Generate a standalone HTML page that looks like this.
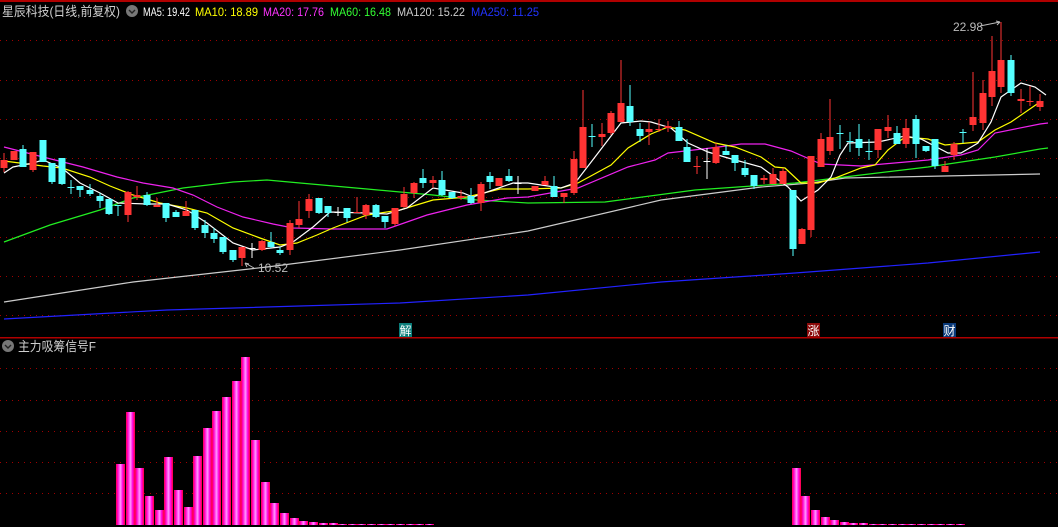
<!DOCTYPE html>
<html><head><meta charset="utf-8"><style>
html,body{margin:0;padding:0;background:#000;width:1058px;height:527px;overflow:hidden}
svg{display:block}
text{font-family:"Liberation Sans","Noto Sans CJK SC",sans-serif}
</style></head><body>
<svg id="s" width="1058" height="527" xmlns="http://www.w3.org/2000/svg">
<defs>
<linearGradient id="bg" x1="0" x2="1" y1="0" y2="0">
<stop offset="0" stop-color="#ff0044"/><stop offset="0.2" stop-color="#ff00cc"/><stop offset="0.5" stop-color="#ff99ff"/><stop offset="0.75" stop-color="#ff00dd"/><stop offset="1" stop-color="#ff0033"/>
</linearGradient>
</defs>
<rect x="0" y="0" width="1058" height="2" fill="#b00000"/>
<g id="grid" stroke="#a00000" stroke-width="1" stroke-dasharray="1,5"></g>
<rect x="0" y="337" width="1058" height="1.5" fill="#b00000"/>
<g id="ma" fill="none" stroke-width="1.2"></g>
<g id="cd"></g>
<g id="bars" fill="url(#bg)"></g>
<text x="2" y="16" font-size="13" fill="#cfcfcf" textLength="118" lengthAdjust="spacingAndGlyphs">星辰科技(日线,前复权)</text>
<circle cx="132" cy="11" r="6" fill="#777"/><path d="M129,10 l3,3 l3,-3" stroke="#222" stroke-width="1.4" fill="none"/>
<text y="16" font-size="12" fill="#fff" x="143" textLength="47" lengthAdjust="spacingAndGlyphs">MA5: 19.42</text>
<text y="16" font-size="12" fill="#ffff00" x="195" textLength="63" lengthAdjust="spacingAndGlyphs">MA10: 18.89</text>
<text y="16" font-size="12" fill="#ff33ff" x="263" textLength="61" lengthAdjust="spacingAndGlyphs">MA20: 17.76</text>
<text y="16" font-size="12" fill="#33ff33" x="330" textLength="61" lengthAdjust="spacingAndGlyphs">MA60: 16.48</text>
<text y="16" font-size="12" fill="#cccccc" x="397" textLength="68" lengthAdjust="spacingAndGlyphs">MA120: 15.22</text>
<text y="16" font-size="12" fill="#2233ff" x="471" textLength="68" lengthAdjust="spacingAndGlyphs">MA250: 11.25</text>
<text x="258" y="272" font-size="12" fill="#bbb">10.52</text>
<path d="M254,268 L245,263 M245,263 l2,4 M245,263 l4,1" stroke="#bbb" fill="none"/>
<text x="953" y="31" font-size="12" fill="#bbb">22.98</text>
<path d="M980,26 L1000,22 M1000,22 l-4,-1 M1000,22 l-3,3" stroke="#bbb" fill="none"/>
<rect x="399" y="323" width="13" height="14" fill="#0a7d7a"/><text x="399.5" y="335" font-size="12" fill="#fff">解</text>
<rect x="807" y="323" width="13" height="14" fill="#8a0a0a"/><text x="807.5" y="335" font-size="12" fill="#fff">涨</text>
<rect x="943" y="323" width="13" height="14" fill="#0a3a7a"/><text x="943.5" y="335" font-size="12" fill="#fff">财</text>
<circle cx="8" cy="346" r="6" fill="#777"/><path d="M5,345 l3,3 l3,-3" stroke="#222" stroke-width="1.4" fill="none"/>
<text x="18" y="351" font-size="13" fill="#cfcfcf" textLength="78" lengthAdjust="spacingAndGlyphs">主力吸筹信号F</text>
</svg>
<script>
var NS="http://www.w3.org/2000/svg";
function el(p,t,a){var e=document.createElementNS(NS,t);for(var k in a)e.setAttribute(k,a[k]);p.appendChild(e);return e;}
var g=document.getElementById('grid');
[40,80,119,158,197,237,276,315,368,400,431,462,493].forEach(function(y){el(g,'line',{x1:0,x2:1058,y1:y+.5,y2:y+.5});});
var ma=document.getElementById('ma');
var lines=[
["#cccccc","4,302 133,282 267,267 400,250 528,231 661,200 761,187 811,183 845,178 1040,174"],
["#2222ff","4,319 167,310 300,306 400,303 528,295 661,282 795,273 928,263 1040,252"],
["#22ee22","4,242 50,225 100,210 133,198 183,188 233,182 267,180 300,183 367,189 433,195 477,200 528,203 605,202 695,190 795,183 861,175 928,167 995,157 1040,149 1048,148"],
["#ee22ee","4,147 43,157 83,167 117,177 143,183 173,188 193,195 217,207 243,217 273,224 293,228 333,229 387,229 427,215 467,205 507,198 528,197 578,188 628,167 655,160 668,153 685,151 711,148 741,144 765,144 791,151 821,164 861,166 928,160 961,155 978,150 995,133 1040,124 1048,123"],
["#ffff00","4,161 43,166 62,168 90,177 110,186 133,195 160,203 187,208 207,213 233,228 260,238 280,245 297,243 317,235 333,228 367,215 400,210 433,200 467,197 500,189 528,189 561,188 578,183 611,165 628,148 651,134 668,127 685,130 715,143 735,147 761,157 775,167 785,168 801,183 818,183 835,178 861,168 875,165 888,150 905,137 928,139 945,145 978,142 995,130 1011,122 1040,102"],
["#ffffff","4,173 13,167 33,163 43,160 62,168 80,183 100,193 118,203 147,204 167,204 187,210 207,223 233,243 253,250 280,247 293,242 313,227 330,212 367,213 387,214 407,208 433,188 463,193 473,197 490,191 513,183 528,183 561,188 575,183 595,157 621,123 641,121 651,122 671,128 688,143 708,152 728,158 761,167 788,187 801,201 818,190 831,177 840,155 848,143 878,142 905,136 921,139 948,153 961,153 978,143 991,122 1001,97 1021,83 1035,87 1046,95"]];
lines.forEach(function(l){el(ma,'polyline',{points:l[1],stroke:l[0]});});
var C=[[4,160,168,153,172,'r'],[14,151,160,151,160,'r'],[23,149,167,145,167,'c'],[33,152,170,152,172,'r'],[43,140,162,140,162,'c'],[52,163,182,163,184,'c'],[62,158,184,158,185,'c'],[71,187,187,180,194,'c'],[80,186,190,186,197,'c'],[90,190,194,184,196,'c'],[100,196,201,193,208,'c'],[109,199,214,199,215,'c'],[118,205,206,205,216,'c'],[128,192,215,191,222,'r'],[137,195,197,186,200,'r'],[147,195,205,192,206,'c'],[157,205,207,198,207,'r'],[166,203,218,203,222,'c'],[176,212,217,210,217,'c'],[186,211,216,201,216,'r'],[195,210,228,210,230,'c'],[205,225,233,220,238,'c'],[214,233,239,228,243,'c'],[223,237,252,237,254,'c'],[233,250,260,250,262,'c'],[242,247,258,247,266,'r'],[252,248,248,243,258,'w'],[262,241,250,240,251,'r'],[271,242,247,232,248,'c'],[280,250,253,247,255,'c'],[290,223,250,220,255,'r'],[299,219,225,201,228,'r'],[309,199,211,194,218,'r'],[319,198,213,198,214,'c'],[328,206,213,206,217,'c'],[338,212,212,207,216,'w'],[347,208,218,208,222,'c'],[357,212,213,197,213,'r'],[366,205,215,204,219,'r'],[376,205,217,204,218,'c'],[385,216,222,216,228,'c'],[395,208,224,208,226,'r'],[404,194,207,187,208,'r'],[414,183,193,182,198,'r'],[423,178,183,169,188,'c'],[433,180,183,176,188,'r'],[442,180,195,171,196,'c'],[452,192,198,192,199,'c'],[461,196,198,190,200,'r'],[471,196,203,188,204,'c'],[481,184,203,182,211,'r'],[490,176,182,172,189,'c'],[499,178,186,178,186,'r'],[509,176,181,169,182,'c'],[518,183,183,176,194,'w'],
[535,186,191,186,191,'r'],[545,181,185,176,185,'r'],[554,186,197,176,197,'c'],[564,193,197,193,203,'r'],[574,159,193,151,195,'r'],[583,127,168,90,168,'r'],[592,136,137,124,147,'c'],[602,134,137,123,146,'r'],[611,113,133,111,135,'r'],[621,103,122,60,122,'r'],[630,106,122,85,126,'c'],[640,129,136,123,142,'c'],[649,129,132,122,145,'r'],[659,129,130,119,132,'r'],[668,126,128,121,132,'r'],[679,127,141,121,141,'c'],[687,147,162,139,162,'c'],[697,166,167,156,174,'r'],[707,161,162,148,179,'w'],[716,147,163,143,164,'r'],[726,151,155,145,155,'c'],[735,155,163,155,171,'c'],[745,168,175,160,177,'c'],[754,175,186,175,189,'c'],[764,178,180,175,184,'r'],[773,174,184,168,184,'r'],[783,171,184,168,184,'r'],[793,190,249,190,256,'c'],[802,229,244,228,244,'r'],[811,156,230,156,237,'r'],[821,139,167,133,167,'r'],[830,137,151,99,155,'r'],[840,133,134,125,149,'c'],[850,141,142,132,152,'c'],[859,139,148,124,156,'c'],[869,151,152,139,160,'c'],[878,129,150,129,158,'r'],[888,127,131,115,138,'r'],[897,133,144,126,144,'c'],[906,128,144,119,148,'r'],[916,119,144,115,158,'c'],[926,146,151,146,152,'c'],[935,139,166,139,169,'c'],[945,166,172,161,172,'r'],[954,144,155,142,160,'r'],[963,132,133,129,143,'c'],[973,117,125,72,131,'r'],[983,93,123,80,130,'r'],[992,71,97,36,106,'r'],[1001,60,87,22,93,'r'],[1011,60,93,55,96,'c'],[1021,99,101,89,113,'r'],[1030,101,102,86,106,'r'],[1040,101,107,94,111,'r']];
var cd=document.getElementById('cd');
var col={r:'#ff3333',c:'#55ffff',w:'#ffffff'};
C.forEach(function(d){var c=col[d[5]];el(cd,'rect',{x:d[0]-.5,y:d[3],width:1,height:Math.max(1,d[4]-d[3]),fill:c});el(cd,'rect',{x:d[0]-3.5,y:d[1],width:7,height:Math.max(1,d[2]-d[1]),fill:c});});
var bars=document.getElementById('bars');
var B=[[116,464],[126,412],[135,468],[145,496],[155,510],[164,457],[174,490],[184,507],[193,456],[203,428],[212,411],[222,397],[232,381],[241,357],[251,440],[261,482],[270,503],[280,513],[290,518],[299,521],[309,522],[319,523],[329,523],[338,524],[348,524],[357,524],[367,524],[377,524],[386,524],[396,524],[406,524],[415,524],[425,524],
[792,468],[801,496],[811,510],[821,517],[830,520],[840,522],[849,523],[859,523],[869,524],[878,524],[888,524],[898,524],[907,524],[917,524],[927,524],[936,524],[946,524],[956,524]];
B.forEach(function(b){el(bars,'rect',{x:b[0],y:b[1],width:9,height:525-b[1]});});
</script>
</body></html>
